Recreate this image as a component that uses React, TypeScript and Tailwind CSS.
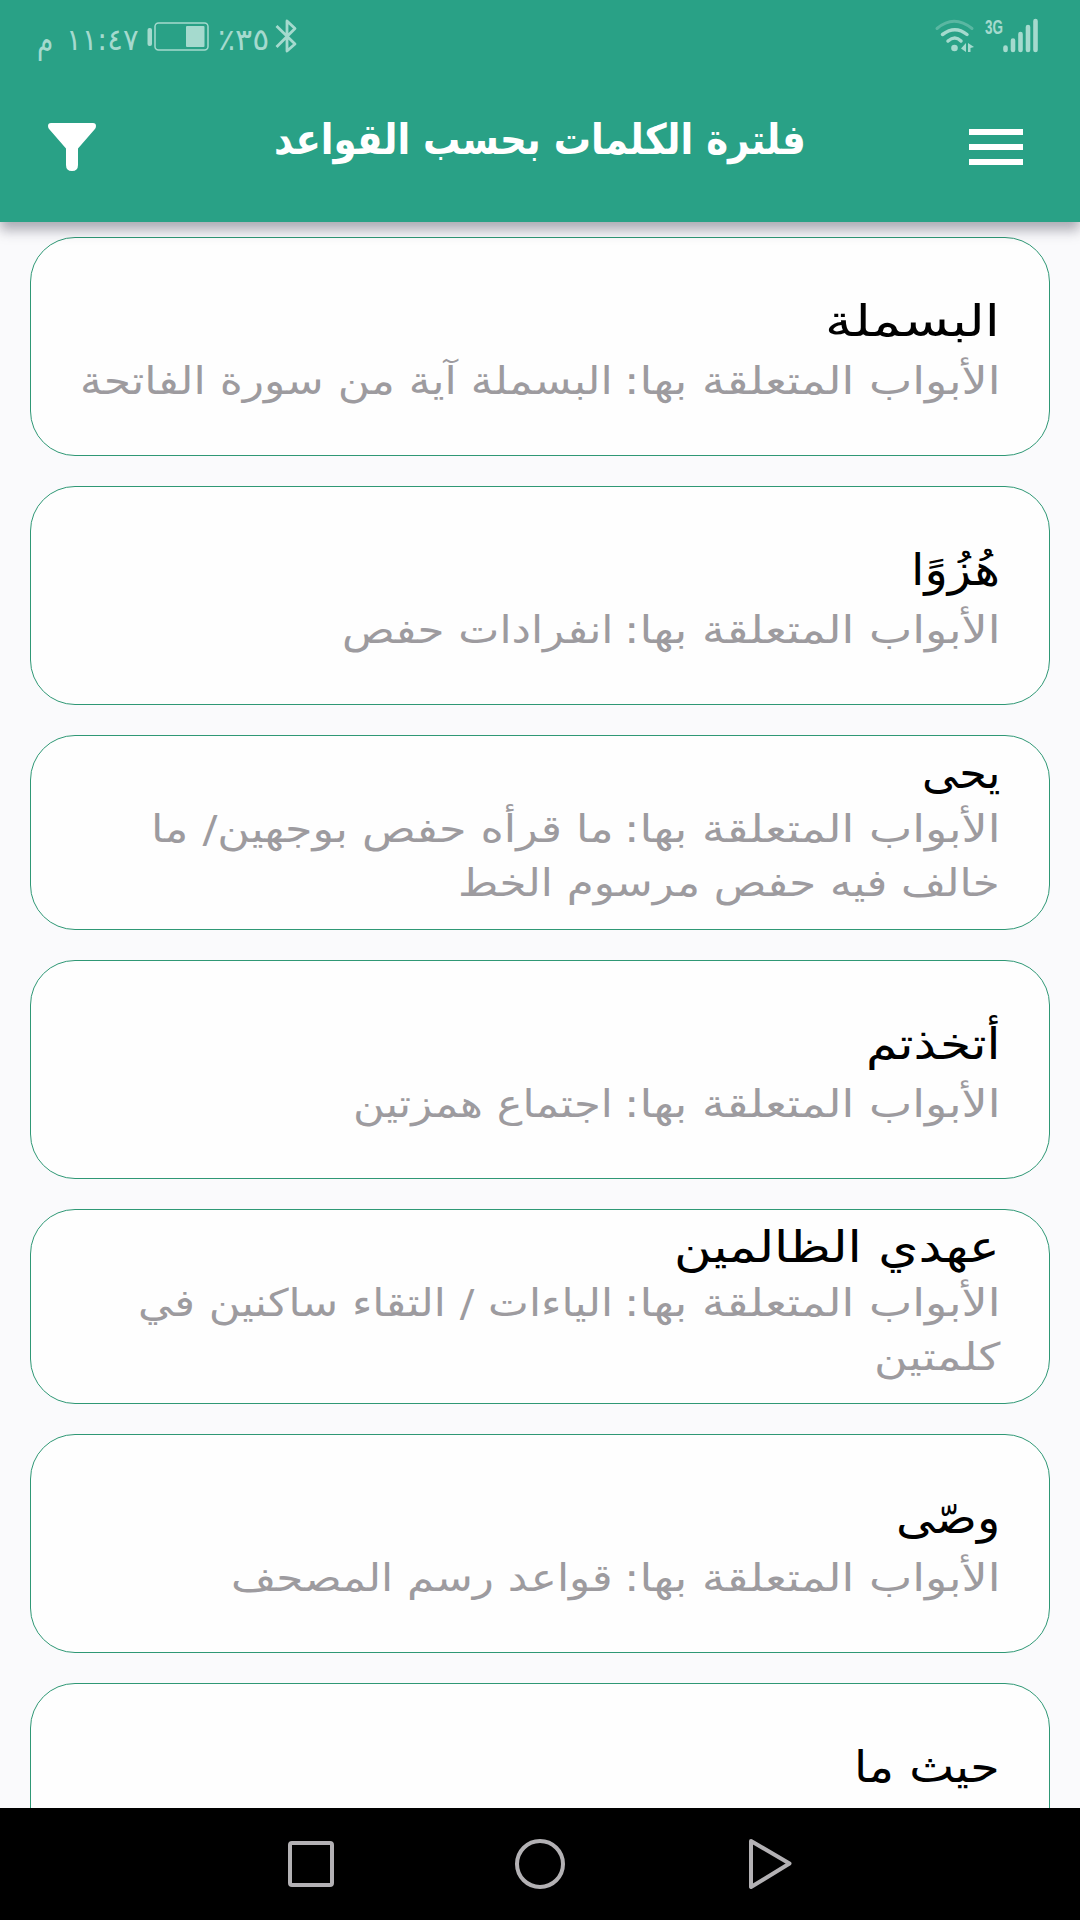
import React, { useLayoutEffect, useRef, useState } from 'react';

interface Line {
  text: string;
  width: number;
}

interface Rule {
  title: Line;
  chapters: Line[];
}

const label: Line = { text: 'الأبواب المتعلقة بها:', width: 376 };

const rules: Rule[] = [
  {
    title: { text: 'البسملة', width: 175 },
    chapters: [{ text: 'البسملة آية من سورة الفاتحة', width: 533 }],
  },
  {
    title: { text: 'هُزُوًا', width: 89 },
    chapters: [{ text: 'انفرادات حفص', width: 271 }],
  },
  {
    title: { text: 'يحى', width: 78 },
    chapters: [
      { text: 'ما قرأه حفص بوجهين/ ما', width: 462 },
      { text: 'خالف فيه حفص مرسوم الخط', width: 542 },
    ],
  },
  {
    title: { text: 'أتخذتم', width: 135 },
    chapters: [{ text: 'اجتماع همزتين', width: 260 }],
  },
  {
    title: { text: 'عهدي الظالمين', width: 326 },
    chapters: [
      { text: 'الياءات / التقاء ساكنين في', width: 475 },
      { text: 'كلمتين', width: 127 },
    ],
  },
  {
    title: { text: 'وصّى', width: 104 },
    chapters: [{ text: 'قواعد رسم المصحف', width: 382 }],
  },
  {
    title: { text: 'حيث ما', width: 146 },
    chapters: [],
  },
];

// Stretches a single line of text to a given width
const FitText = ({ text, width, className = '' }: Line & { className?: string }) => {
  const ref = useRef<HTMLSpanElement>(null);
  const [scale, setScale] = useState(1);

  useLayoutEffect(() => {
    if (ref.current) setScale(width / ref.current.offsetWidth);
  }, [width]);

  return (
    <div dir="rtl" className={`flex shrink-0 whitespace-nowrap ${className}`} style={{ width }}>
      <span ref={ref} className="block shrink-0 origin-right" style={{ transform: `scaleX(${scale})` }}>
        {text}
      </span>
    </div>
  );
};

const StatusBar = () => (
  <div dir="ltr" className="flex h-[74px] items-start justify-between pl-[37px] pr-[41px] text-[#a5dace]">
    <div className="flex items-start">
      <FitText text="م" width={16} className="mt-[20px] h-10 text-[36px] leading-10" />
      <FitText text="١١:٤٧" width={73} className="ml-[13px] mt-[20px] h-10 text-[30px] leading-10" />
      <svg width="62" height="30" viewBox="0 0 62 30" className="ml-[8px] mt-[22px]" fill="none">
        <rect x="0.5" y="6" width="4.5" height="18" rx="2" fill="currentColor" />
        <rect x="8" y="1" width="53" height="27" rx="3.5" stroke="currentColor" strokeWidth="1.5" />
        <rect x="39" y="4" width="18.5" height="21" rx="1" fill="currentColor" />
      </svg>
      <FitText text="٣٥٪" width={51} className="ml-[9px] mt-[20px] h-10 text-[30px] leading-10" />
      <svg width="22" height="36" viewBox="0 0 22 36" className="ml-[6px] mt-[18px]" fill="none" stroke="currentColor" strokeWidth="2.8">
        <path d="M1.5 8 L20 26 L12 33 V3 L20 10.5 L1.5 29" strokeLinejoin="round" />
      </svg>
    </div>
    <svg width="104" height="40" viewBox="0 -4 104 40" className="mt-[14px] overflow-visible" fill="none" stroke="currentColor">
      <path d="M2 10.5 Q19 -4 37 10.5" strokeWidth="3" strokeLinecap="round" opacity="0.4" />
      <path d="M7.5 16.5 Q20 7 32 16.5" strokeWidth="3.5" strokeLinecap="round" />
      <path d="M13 23 Q20 17 26 23" strokeWidth="3.5" strokeLinecap="round" />
      <circle cx="19.5" cy="30" r="3.3" fill="currentColor" stroke="none" />
      <path d="M31 25 V34 L26 30.5 Z M33 25 L39 29 L35.5 30 V34 H33 Z" fill="currentColor" stroke="none" />
      <text x="50" y="15.5" fontSize="20" fontWeight="700" textLength="18" lengthAdjust="spacingAndGlyphs" fill="currentColor" stroke="none" fontFamily="Liberation Sans, sans-serif">
        3G
      </text>
      <path d="M70.5 29.5 V32 M78 22.5 V32 M85.5 16 V32 M93 9 V32 M100.5 3 V32" strokeWidth="4.6" strokeLinecap="round" />
    </svg>
  </div>
);

const AppBar = () => (
  <header className="relative z-10 h-[222px] shrink-0 bg-[#29a186] shadow-[0_8px_12px_rgba(50,50,70,0.4)]">
    <StatusBar />
    <div className="flex h-[148px] items-start justify-between pl-12 pr-[57px]" dir="ltr">
      <svg width="48" height="48" viewBox="0 0 48 48" className="mt-[49px]" fill="#fff">
        <path d="M3 0 H45 Q48 0 48 3 Q48 5 46.5 6.5 L30 25.5 V42 Q30 48 24 48 Q18 48 18 42 V25.5 L1.5 6.5 Q0 5 0 3 Q0 0 3 0 Z" />
      </svg>
      <h1 className="ml-[178px] mr-auto">
        <FitText text="فلترة الكلمات بحسب القواعد" width={532} className="mt-[34px] h-16 text-[42px] font-bold leading-[64px] text-white" />
      </h1>
      <button className="mt-[55px] flex w-[54px] flex-col gap-[9px]">
        <span className="h-1.5 w-full bg-white" />
        <span className="h-1.5 w-full bg-white" />
        <span className="h-1.5 w-full bg-white" />
      </button>
    </div>
  </header>
);

const RuleCard = ({ rule }: { rule: Rule }) => {
  const tall = rule.chapters.length < 2;
  return (
    <div
      className={`w-full shrink-0 rounded-[45px] border border-[#2f9875] bg-[#fefefe] pr-[49px] ${
        tall ? 'h-[219px] pt-[53px]' : 'h-[195px] pt-[7px]'
      }`}
    >
      <FitText {...rule.title} className="h-[60px] text-[44px] leading-[60px] text-black" />
      <div className={`text-[38px] leading-[54px] text-[#9d9b9f] ${tall ? 'mt-[3px]' : '-mt-px'}`}>
        {rule.chapters.map((line, i) => (
          <div key={line.text} className="flex h-[54px] gap-[11px]">
            {i === 0 && <FitText {...label} />}
            <FitText {...line} />
          </div>
        ))}
      </div>
    </div>
  );
};

const NavBar = () => (
  <nav dir="ltr" className="relative z-10 flex h-28 shrink-0 items-start bg-black pl-[286px] pt-[29px]">
    <svg width="508" height="54" viewBox="0 0 508 54" fill="none" stroke="#b3b1b4" strokeWidth="4" strokeLinejoin="round">
      <rect x="4" y="6" width="42" height="42" rx="2" />
      <circle cx="254" cy="27" r="23" />
      <path d="M465 4 L503.5 26.5 L465 50 Z" />
    </svg>
  </nav>
);

const App: React.FC = () => {
  return (
    <div
      dir="rtl"
      className="flex h-[1920px] w-[1080px] flex-col overflow-hidden bg-[#fafafc] font-['DejaVu_Sans',sans-serif]"
    >
      <AppBar />
      <main className="flex min-h-0 flex-1 flex-col gap-[30px] overflow-hidden px-[30px] pt-[15px]">
        {rules.map((rule) => (
          <RuleCard key={rule.title.text} rule={rule} />
        ))}
      </main>
      <NavBar />
    </div>
  );
};

export default App;
